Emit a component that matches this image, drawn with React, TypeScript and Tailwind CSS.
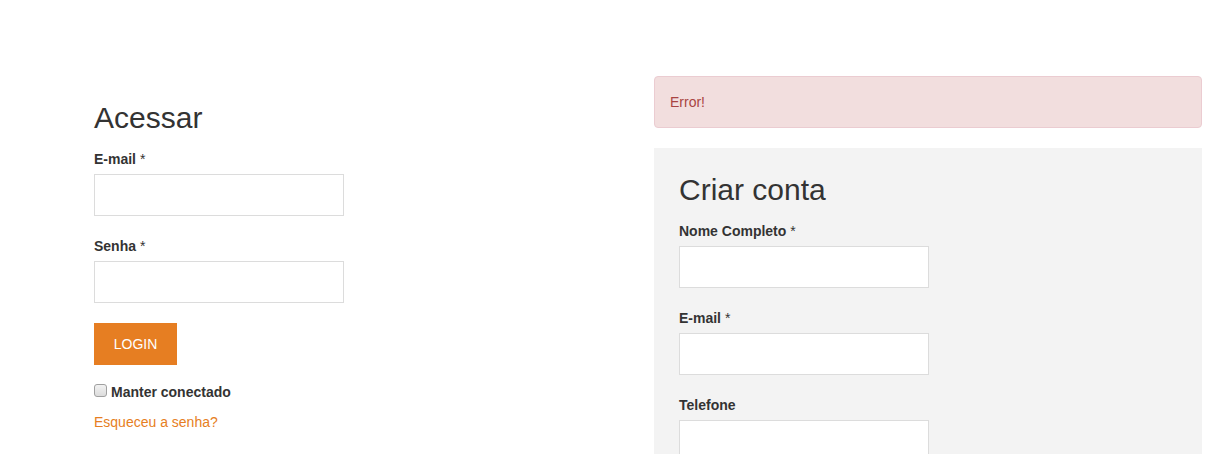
const ORANGE = '#e67e22';

function Field({ label, required }: { label: string; required?: boolean }) {
  return (
    <div className="mb-[20px]">
      <label className="block mb-[5px] text-[14px] leading-[20px] font-bold text-[#333]">
        {label}
        {required && <span className="font-normal"> *</span>}
      </label>
      <input
        type="text"
        className="block w-[250px] h-[42px] bg-white border border-[#dcdcdc] outline-none px-3"
      />
    </div>
  );
}

export default function App() {
  return (
    <div
      className="w-full h-[454px] overflow-hidden bg-white flex text-[#333]"
      style={{ fontFamily: '"Liberation Sans", Arial, sans-serif' }}
    >
      {/* Acessar */}
      <div className="w-[654px] shrink-0 pl-[94px] pt-[101px]">
        <h3 className="text-[30px] leading-[33px] font-normal mb-[15px]">Acessar</h3>
        <Field label="E-mail" required />
        <Field label="Senha" required />
        <button
          className="h-[42px] w-[83px] text-white text-[14px] leading-[20px] uppercase"
          style={{ background: ORANGE }}
        >
          LOGIN
        </button>
        <div className="mt-[17px] flex items-center h-[20px]">
          <span className="w-[13px] h-[13px] rounded-[3px] border border-[#a0a0a0] bg-gradient-to-b from-[#f2f2f2] to-[#dcdcdc] mr-[4px] mt-[-3px]" />
          <span className="text-[14px] leading-[20px] font-bold">Manter conectado</span>
        </div>
        <a href="#" className="block mt-[10px] text-[14px] leading-[20px] text-[#e67e22]">
          Esqueceu a senha?
        </a>
      </div>

      {/* Criar conta */}
      <div className="w-[548px] shrink-0 pt-[76px] flex flex-col">
        <div className="h-[52px] px-[15px] py-[15px] mb-[20px] rounded-[4px] border border-[#ebccd1] bg-[#f2dede] text-[#a94442] text-[14px] leading-[20px]">
          Error!
        </div>
        <div className="flex-1 bg-[#f3f3f3] pl-[25px] pt-[25px]">
          <h3 className="text-[30px] leading-[33px] font-normal mb-[15px]">Criar conta</h3>
          <Field label="Nome Completo" required />
          <Field label="E-mail" required />
          <Field label="Telefone" />
        </div>
      </div>
    </div>
  );
}
